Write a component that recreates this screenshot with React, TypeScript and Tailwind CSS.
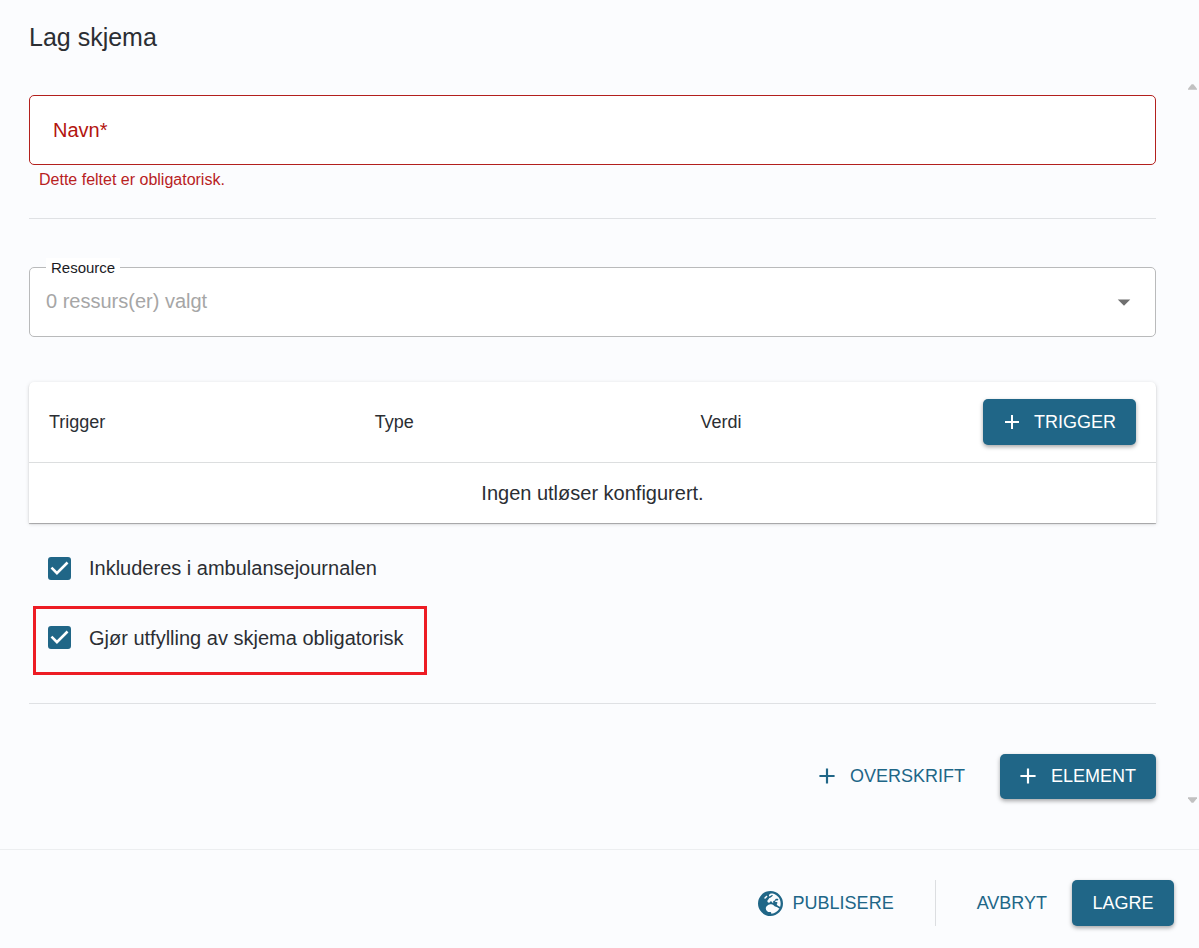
import React from "react";
import { FaEarthEurope } from "react-icons/fa6";

const solidButton =
  "flex items-center rounded-[5px] bg-[#206687] text-lg font-normal text-white shadow-[0_2px_4px_rgba(0,0,0,0.35)]";
const textButton = "flex items-center text-lg text-[#206687]";

function PlusIcon({ className }: { className: string }) {
  return (
    <svg viewBox="0 0 24 24" fill="currentColor" className={className} aria-hidden="true">
      <path d="M19 13h-6v6h-2v-6H5v-2h6V5h2v6h6v2z" />
    </svg>
  );
}

function CheckRow({ id, label }: { id: string; label: string }) {
  return (
    <div className="flex items-center gap-[18px]">
      <span className="grid size-[23px] place-items-center">
        <input
          id={id}
          type="checkbox"
          defaultChecked
          className="peer col-start-1 row-start-1 size-[23px] appearance-none rounded-[3px] border-2 border-[#206687] checked:bg-[#206687]"
        />
        <svg
          viewBox="3 3 18 18"
          fill="white"
          className="pointer-events-none col-start-1 row-start-1 size-[23px] opacity-0 peer-checked:opacity-100"
          aria-hidden="true"
        >
          <path d="M10 17l-5-5 1.41-1.41L10 14.17l7.59-7.59L19 8z" />
        </svg>
      </span>
      <label htmlFor={id} className="text-xl">
        {label}
      </label>
    </div>
  );
}

export default function App() {
  return (
    <div className="flex min-h-screen flex-col bg-[#fbfcfe] font-['Liberation_Sans',Arial,sans-serif] text-[#2b2e33]">
      <header className="px-[29px] pt-[19px] pb-[21px]">
        <h1 className="text-[25px] leading-9">Lag skjema</h1>
      </header>

      <main className="flex grow">
        <form className="flex min-w-0 grow flex-col pt-[19px] pb-[50px] pl-[29px]">
          <div className="relative">
            <input
              id="navn"
              type="text"
              required
              placeholder=" "
              aria-describedby="navn-error"
              className="peer block h-[70px] w-full rounded-[5px] border border-[#b3201d] bg-white px-6 text-xl text-[#212429] outline-none"
            />
            <label
              htmlFor="navn"
              className="pointer-events-none absolute top-0 left-6 hidden h-[70px] items-center text-xl text-[#b3150f] peer-placeholder-shown:flex"
            >
              Navn*
            </label>
          </div>
          <p id="navn-error" className="mt-[5px] px-2.5 text-base leading-5 text-[#b8221f]">
            Dette feltet er obligatorisk.
          </p>

          <hr className="mt-7 border-[#dfe1e4]" />

          <div className="relative mt-12">
            <select
              id="resource"
              className="block h-[70px] w-full appearance-none rounded-[5px] border border-[#b9babb] bg-white px-4 pb-0.5 text-xl text-[#a6a6a6] outline-none"
            >
              <option>0 ressurs(er) valgt</option>
            </select>
            <label
              htmlFor="resource"
              className="absolute -top-[9px] left-[17px] bg-white px-[5px] text-[15px] leading-5 text-[#1b1b1f]"
            >
              Resource
            </label>
            <svg
              viewBox="0 0 24 24"
              fill="#6f6f6f"
              className="pointer-events-none absolute top-5 right-[17px] size-[30px]"
              aria-hidden="true"
            >
              <path d="M7 10l5 5 5-5z" />
            </svg>
          </div>

          <table className="mt-[45px] w-full table-fixed rounded-t-[5px] bg-white shadow-[0_1px_1px_rgba(0,0,0,0.3),0_1px_4px_rgba(0,0,0,0.14)]">
            <thead>
              <tr className="h-[80px] border-b border-[#dcdedf] text-left text-lg">
                <th className="w-[28.9%] px-5 font-normal">Trigger</th>
                <th className="w-[28.9%] px-5 font-normal">Type</th>
                <th className="px-5 font-normal">Verdi</th>
                <th className="w-[193px] px-5 font-normal">
                  <button type="button" className={`${solidButton} h-[46px] w-full justify-end gap-2.5 pr-5`}>
                    <PlusIcon className="size-6" />
                    TRIGGER
                  </button>
                </th>
              </tr>
            </thead>
            <tbody>
              <tr className="h-[61px]">
                <td colSpan={4} className="text-center text-xl">
                  Ingen utløser konfigurert.
                </td>
              </tr>
            </tbody>
          </table>

          <div className="flex h-[80px] items-center px-[19px] pt-2.5">
            <CheckRow id="journal" label="Inkluderes i ambulansejournalen" />
          </div>
          <div className="mt-[3px] ml-1 flex h-[69px] w-fit items-center border-[3px] border-[#ed1c24] pr-5 pb-1.5 pl-3">
            <CheckRow id="obligatorisk" label="Gjør utfylling av skjema obligatorisk" />
          </div>

          <hr className="mt-7 border-[#dfe1e4]" />

          <div className="mt-[50px] flex justify-end gap-[35px]">
            <button type="button" className={`${textButton} h-[45px] gap-2.5 pb-0.5`}>
              <PlusIcon className="size-[26px]" />
              OVERSKRIFT
            </button>
            <button type="button" className={`${solidButton} h-[45px] gap-2.5 pr-5 pb-0.5 pl-[15px]`}>
              <PlusIcon className="size-[26px]" />
              ELEMENT
            </button>
          </div>
        </form>

        <div
          className="flex w-[43px] shrink-0 flex-col items-end justify-between pt-2 pr-0.5 pb-[46px]"
          aria-hidden="true"
        >
          <svg viewBox="0 0 10 6" fill="#c1c1c1" className="h-1.5 w-[9px]">
            <path d="M4 0h2l4 5v1H0V5z" />
          </svg>
          <svg viewBox="0 0 10 6" fill="#c1c1c1" className="h-1.5 w-[9px]">
            <path d="M0 0h10v1L6 6H4L0 1z" />
          </svg>
        </div>
      </main>

      <footer className="flex h-[99px] items-center justify-end border-t border-[#eceef0] pt-2 pr-[25px]">
        <button type="button" className={`${textButton} h-[46px] gap-2.5`}>
          <FaEarthEurope className="size-[25px]" aria-hidden="true" />
          PUBLISERE
        </button>
        <div className="mx-[41px] h-[46px] w-px bg-[#dcdee1]" />
        <button type="button" className={`${textButton} h-[46px]`}>
          AVBRYT
        </button>
        <button type="button" className={`${solidButton} ml-[25px] h-[46px] min-w-[102px] justify-center px-5`}>
          LAGRE
        </button>
      </footer>
    </div>
  );
}
